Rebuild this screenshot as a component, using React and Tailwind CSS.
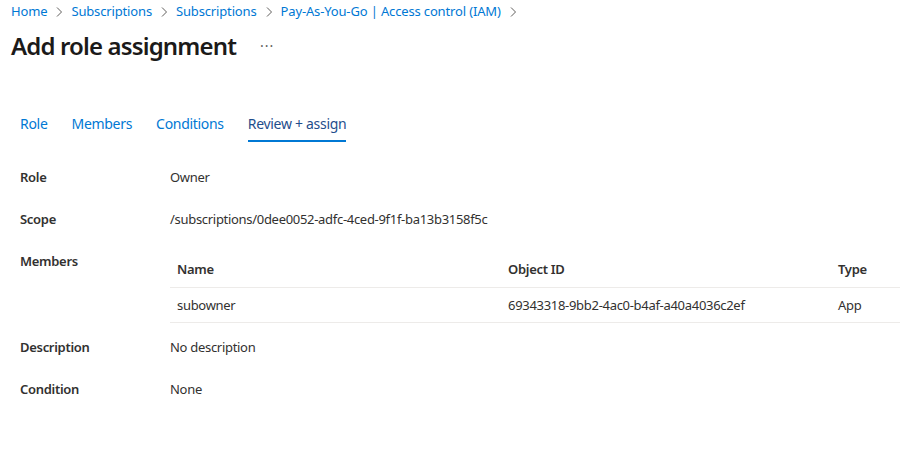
import React from 'react';

const crumbs = ['Home', 'Subscriptions', 'Subscriptions', 'Pay-As-You-Go | Access control (IAM)'];
const tabs = ['Role', 'Members', 'Conditions', 'Review + assign'];

const Chevron = () => (
    <svg width="8" height="12" viewBox="0 0 8 12" className="mx-[8px]">
        <path d="M2 1.5 L6.5 6 L2 10.5" fill="none" stroke="#605e5c" strokeWidth="1" />
    </svg>
);

const Row = ({ label, children, className = '' }) => (
    <div className={`flex ${className}`}>
        <div className="w-[150px] shrink-0 font-semibold text-[#323130] leading-[18px]">{label}</div>
        <div className="flex-1 leading-[18px]">{children}</div>
    </div>
);

export default function App() {
    return (
        <div
            className="w-[900px] h-[464px] bg-white text-[13px] text-[#323130] overflow-hidden tracking-[-0.3px]"
            style={{ fontFamily: '"Noto Sans", sans-serif' }}
        >
            {/* breadcrumb */}
            <div className="flex items-center pl-[11px] pt-[1px] h-[23px] text-[13px] text-[#0078d4] tracking-[-0.15px]">
                {crumbs.map((c, i) => (
                    <React.Fragment key={i}>
                        <span>{c}</span>
                        <Chevron />
                    </React.Fragment>
                ))}
            </div>

            {/* title */}
            <div className="flex items-center pl-[11px] h-[45px]">
                <h1 className="text-[24px] font-semibold text-[#1b1a19] tracking-[-0.85px]">Add role assignment</h1>
                <span className="ml-[24px] text-[#605e5c] text-[14px] tracking-[1px]">···</span>
            </div>

            {/* tabs */}
            <div className="flex pl-[20px] mt-[46px] gap-[24px] text-[14px] tracking-[-0.3px]">
                {tabs.map((t, i) => (
                    <div
                        key={t}
                        className={`pb-[6px] leading-[20px] border-b-2 ${i === 3 ? 'border-[#0078d4] text-[#1f4e8c]' : 'border-transparent text-[#0078d4]'}`}
                    >
                        {t}
                    </div>
                ))}
            </div>

            {/* details */}
            <div className="pl-[20px] mt-[26px] flex flex-col">
                <Row label="Role" className="h-[42px]">Owner</Row>
                <Row label="Scope" className="h-[42px]">/subscriptions/0dee0052-adfc-4ced-9f1f-ba13b3158f5c</Row>
                <Row label="Members">
                    <div className="flex flex-col">
                        <div className="flex h-[36px] pt-[8px] pl-[7px] font-semibold border-b border-[#edebe9]">
                            <div className="w-[331px]">Name</div>
                            <div className="w-[330px]">Object ID</div>
                            <div>Type</div>
                        </div>
                        <div className="flex h-[35px] items-center pl-[7px] border-b border-[#edebe9]">
                            <div className="w-[331px]">subowner</div>
                            <div className="w-[330px]">69343318-9bb2-4ac0-b4af-a40a4036c2ef</div>
                            <div>App</div>
                        </div>
                    </div>
                </Row>
                <Row label="Description" className="mt-[15px] h-[42px]">No description</Row>
                <Row label="Condition" className="h-[42px]">None</Row>
            </div>
        </div>
    );
}
